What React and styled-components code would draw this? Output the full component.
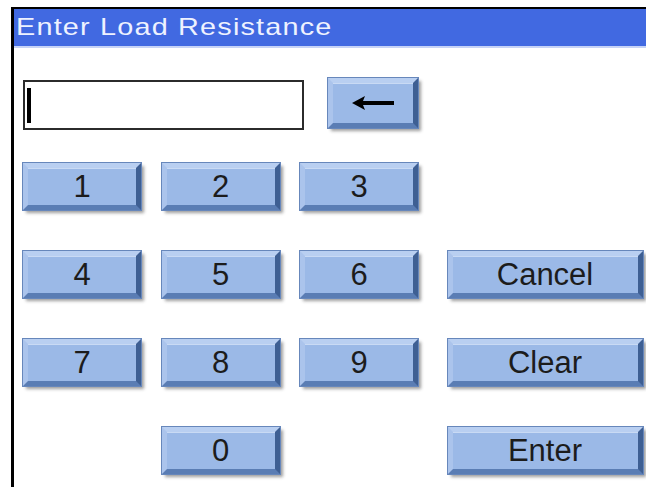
import React from 'react';
import styled, { createGlobalStyle } from 'styled-components';

const GlobalStyle = createGlobalStyle`
  html, body {
    margin: 0;
    padding: 0;
    background: #ffffff;
  }
  body {
    font-family: "Liberation Sans", Arial, sans-serif;
  }
`;

const Panel = styled.div`
  margin: 7px 0 0 11px;
  border-top: 2px solid #000;
  border-left: 3px solid #000;
  height: 478px;
  overflow: hidden;
  background: #fff;
`;

const TitleBar = styled.div`
  height: 39px;
  background: #4169e1;
  border-bottom: 2px solid #c6d3f6;
  display: flex;
  align-items: flex-start;
  padding: 4px 0 0 2px;
  box-sizing: border-box;
`;

const Title = styled.span`
  display: inline-block;
  color: #eef2ff;
  font-size: 24px;
  letter-spacing: 1px;
  line-height: 28px;
  transform: scaleX(1.2);
  transform-origin: left center;
`;

const Body = styled.div`
  padding: 30px 0 0 9px;
`;

const EntryRow = styled.div`
  display: flex;
  align-items: flex-start;
  gap: 24px;
`;

const Display = styled.div`
  margin-top: 2px;
  width: 281px;
  height: 50px;
  box-sizing: border-box;
  border: 2px solid #2b2b2b;
  display: flex;
  align-items: center;
  padding-left: 2px;
`;

const Caret = styled.div`
  width: 4px;
  height: 35px;
  background: #000;
`;

const Keypad = styled.div`
  margin-top: 33px;
  display: grid;
  grid-template-columns: repeat(3, 118px) 204px;
  grid-auto-rows: 48px;
  column-gap: 20.5px;
  row-gap: 40px;
`;

const Key = styled.button`
  width: ${p => p.$width || 118}px;
  height: 47px;
  justify-self: end;
  grid-column: ${p => p.$col};
  grid-row: ${p => p.$row};
  box-sizing: border-box;
  padding: 0;
  background: #9bb9e7;
  border-style: solid;
  border-width: 5px;
  border-top-color: #b9cff1;
  border-left-color: #abc4ec;
  border-bottom-color: #5a7db4;
  border-right-color: #3e5f93;
  box-shadow: 0 0 0 1px #6787bb, inset 0 1px 0 #c9daf4, 3px 3px 3px rgba(40, 40, 40, 0.45);
  font-family: "Liberation Sans", Arial, sans-serif;
  font-size: 31px;
  line-height: 1;
  color: #1c1c1c;
  display: flex;
  align-items: center;
  justify-content: center;
  cursor: pointer;
`;

const BackKey = styled(Key)`
  width: 90px;
  height: 50px;
`;

const ArrowIcon = () => (
  <svg width="42" height="14" viewBox="0 0 42 14">
    <path d="M0 7 L13 0 L11 5 L42 5 L42 9 L11 9 L13 14 Z" fill="#000" />
  </svg>
);

const keys = [
  { label: '1', col: 1, row: 1 },
  { label: '2', col: 2, row: 1 },
  { label: '3', col: 3, row: 1 },
  { label: '4', col: 1, row: 2 },
  { label: '5', col: 2, row: 2 },
  { label: '6', col: 3, row: 2 },
  { label: 'Cancel', col: 4, row: 2, width: 195 },
  { label: '7', col: 1, row: 3 },
  { label: '8', col: 2, row: 3 },
  { label: '9', col: 3, row: 3 },
  { label: 'Clear', col: 4, row: 3, width: 195 },
  { label: '0', col: 2, row: 4 },
  { label: 'Enter', col: 4, row: 4, width: 195 },
];

export default function App() {
  return (
    <>
      <GlobalStyle />
      <Panel>
        <TitleBar>
          <Title>Enter Load Resistance</Title>
        </TitleBar>
        <Body>
          <EntryRow>
            <Display>
              <Caret />
            </Display>
            <BackKey aria-label="Backspace">
              <ArrowIcon />
            </BackKey>
          </EntryRow>
          <Keypad>
            {keys.map(k => (
              <Key key={k.label} $col={k.col} $row={k.row} $width={k.width}>
                {k.label}
              </Key>
            ))}
          </Keypad>
        </Body>
      </Panel>
    </>
  );
}
